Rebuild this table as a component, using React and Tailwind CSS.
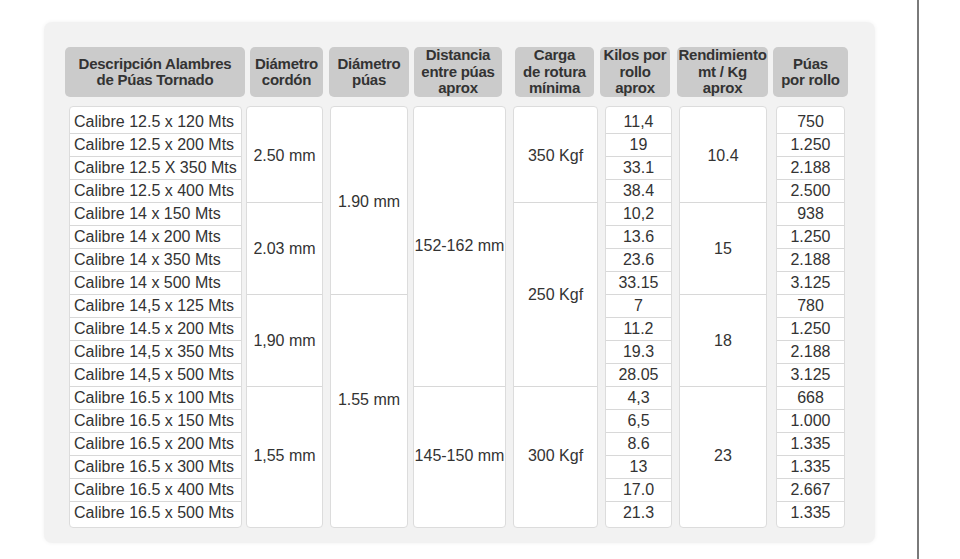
import React from 'react';

const font = { fontFamily: '"Liberation Sans", Arial, sans-serif' };

const headers = [
  { lines: ['Descripción Alambres', 'de Púas Tornado'], cls: 'w-[180px]' },
  { lines: ['Diámetro', 'cordón'], cls: 'w-[73px] ml-[5px]' },
  { lines: ['Diámetro', 'púas'], cls: 'w-[80px] ml-[6px]' },
  { lines: ['Distancia', 'entre púas', 'aprox'], cls: 'w-[88px] ml-[5px]' },
  { lines: ['Carga', 'de rotura', 'mínima'], cls: 'w-[79px] ml-[13px]' },
  { lines: ['Kilos por', 'rollo', 'aprox'], cls: 'w-[70px] ml-[6px]' },
  { lines: ['Rendimiento', 'mt / Kg', 'aprox'], cls: 'w-[91px] ml-[7px]' },
  { lines: ['Púas', 'por rollo'], cls: 'w-[75px] ml-[5px]' },
];

const descripciones = [
  'Calibre 12.5 x 120 Mts',
  'Calibre 12.5 x 200 Mts',
  'Calibre 12.5 X 350 Mts',
  'Calibre 12.5 x 400 Mts',
  'Calibre 14 x 150 Mts',
  'Calibre 14 x 200 Mts',
  'Calibre 14 x 350 Mts',
  'Calibre 14 x 500 Mts',
  'Calibre 14,5 x 125 Mts',
  'Calibre 14.5 x 200 Mts',
  'Calibre 14,5 x 350 Mts',
  'Calibre 14,5 x 500 Mts',
  'Calibre 16.5 x 100 Mts',
  'Calibre 16.5 x 150 Mts',
  'Calibre 16.5 x 200 Mts',
  'Calibre 16.5 x 300 Mts',
  'Calibre 16.5 x 400 Mts',
  'Calibre 16.5 x 500 Mts',
];

const kilos = ['11,4', '19', '33.1', '38.4', '10,2', '13.6', '23.6', '33.15', '7', '11.2', '19.3', '28.05', '4,3', '6,5', '8.6', '13', '17.0', '21.3'];
const puas = ['750', '1.250', '2.188', '2.500', '938', '1.250', '2.188', '3.125', '780', '1.250', '2.188', '3.125', '668', '1.000', '1.335', '1.335', '2.667', '1.335'];

// columnas con celdas combinadas: [texto, filas, clase extra]
const cordon = [['2.50 mm', 4], ['2.03 mm', 4], ['1,90 mm', 4], ['1,55 mm', 6]];
const diamPuas = [['1.90 mm', 8], ['1.55 mm', 10, 'pb-[20px]']];
const distancia = [['152-162 mm', 12, 'pb-[4px]'], ['145-150 mm', 6]];
const carga = [['350 Kgf', 4], ['250 Kgf', 8], ['300 Kgf', 6]];
const rendimiento = [['10.4', 4], ['15', 4], ['18', 4], ['23', 6]];

const ROW = 23;

const Column = ({ className, children }) => (
  <div className={`bg-white border border-[#dcdcdc] rounded-[4px] py-[3px] flex flex-col ${className}`}>
    {children}
  </div>
);

const SimpleColumn = ({ items, className, left }) => (
  <Column className={className}>
    {items.map((t, i) => (
      <div
        key={i}
        className={`h-[23px] flex items-center whitespace-nowrap ${left ? 'px-[4px]' : 'justify-center'} ${i > 0 ? 'border-t border-[#d8d8d8]' : ''}`}
      >
        {t}
      </div>
    ))}
  </Column>
);

const MergedColumn = ({ items, className }) => (
  <Column className={className}>
    {items.map(([t, span, extra], i) => (
      <div
        key={i}
        className={`flex items-center justify-center whitespace-nowrap ${i > 0 ? 'border-t border-[#d8d8d8]' : ''} ${extra || ''}`}
        style={{ height: span * ROW }}
      >
        {t}
      </div>
    ))}
  </Column>
);

export default function App() {
  return (
    <div className="w-[960px] h-[559px] bg-white flex overflow-hidden" style={font}>
      <div className="mt-[22px] ml-[44px] w-[831px] h-[521px] bg-[#f2f2f2] rounded-[8px] shadow-[0_0_4px_rgba(0,0,0,0.06)] pt-[25px] pl-[21px]">
        {/* Encabezados */}
        <div className="flex">
          {headers.map((h, i) => (
            <div
              key={i}
              className={`h-[50px] bg-[#cbcbcb] rounded-[5px] flex flex-col items-center justify-center text-[#333] font-bold text-[15px] leading-[16.5px] tracking-[-0.25px] text-center ${h.cls}`}
            >
              {h.lines.map((l, j) => (
                <span key={j} className="whitespace-nowrap">{l}</span>
              ))}
            </div>
          ))}
        </div>

        {/* Cuerpo */}
        <div className="flex mt-[9px] ml-[4px] text-[16px] text-[#333]">
          <SimpleColumn items={descripciones} className="w-[173px]" left />
          <MergedColumn items={cordon} className="w-[77px] ml-[4px]" />
          <MergedColumn items={diamPuas} className="w-[78px] ml-[7px]" />
          <MergedColumn items={distancia} className="w-[93px] ml-[5px]" />
          <MergedColumn items={carga} className="w-[85px] ml-[7px]" />
          <SimpleColumn items={kilos} className="w-[67px] ml-[7px]" />
          <MergedColumn items={rendimiento} className="w-[88px] ml-[7px]" />
          <SimpleColumn items={puas} className="w-[69px] ml-[9px]" />
        </div>
      </div>
      <div className="ml-[42px] w-[2px] h-full bg-[#7a7a7a]" />
    </div>
  );
}
